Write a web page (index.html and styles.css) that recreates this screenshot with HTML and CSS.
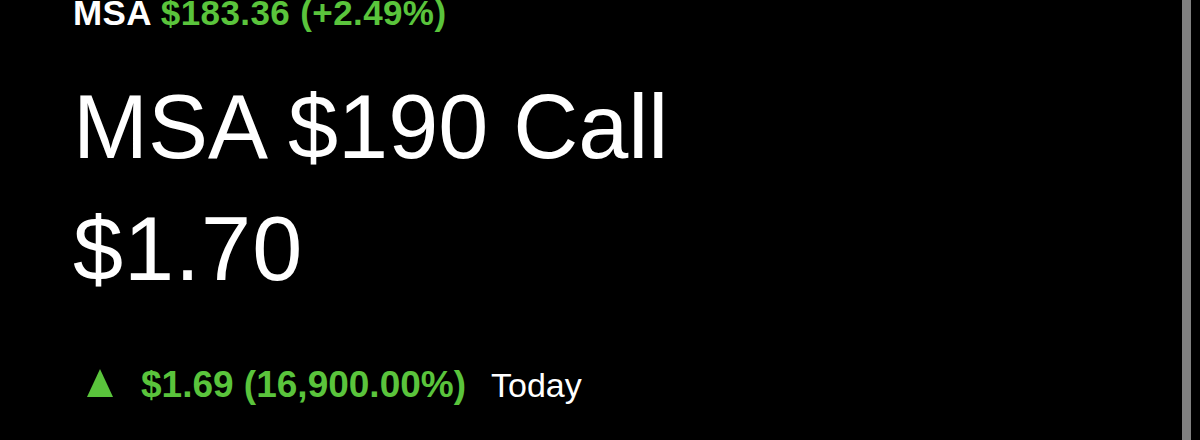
FILE: index.html
```html
<!DOCTYPE html>
<html>
<head>
    <title>MSA $190 Call</title>
    <link rel="stylesheet" href="styles.css">
</head>
<body>
    <div class="screen">
        <main class="quote">
            <!-- Underlying -->
            <div class="ticker">
                <span class="symbol">MSA</span>
                <span class="up">$183.36 (+2.49%)</span>
            </div>

            <h1 class="title">MSA $190 Call</h1>
            <div class="price">$1.70</div>

            <!-- Day change -->
            <div class="change">
                <svg class="arrow" width="26" height="28" viewBox="0 0 26 28">
                    <path d="M13,0 L26,28 L0,28 Z" fill="#5ac43c"/>
                </svg>
                <span class="up amount">$1.69 (16,900.00%)</span>
                <span class="period">Today</span>
            </div>
        </main>
        <div class="scrollbar"></div>
    </div>
</body>
</html>
```

FILE: styles.css
```css
html, body {
    margin: 0;
    height: 100%;
    background: #000;
    overflow: hidden;
}
body {
    font-family: "Liberation Sans", Arial, sans-serif;
    color: #fff;
}
.screen {
    display: flex;
    height: 440px;
}
.quote {
    flex: 0 0 1109px;
    padding-left: 73px;
}
.scrollbar {
    flex: 0 0 9px;
    background: #808080;
}
.up {
    color: #5ac43c;
}
.ticker {
    margin-top: -7px;
    font-size: 35px;
    font-weight: bold;
    line-height: 40px;
    letter-spacing: 0.4px;
}
.title {
    margin: 44px 0 0;
    font-size: 90px;
    font-weight: normal;
    line-height: 100px;
}
.price {
    margin-top: 22px;
    font-size: 90px;
    line-height: 100px;
    letter-spacing: 1px;
}
.change {
    display: flex;
    align-items: baseline;
    margin-top: 64px;
    line-height: 44px;
}
.arrow {
    margin: 0 28px -2px 14px;
}
.amount {
    font-size: 37px;
    font-weight: bold;
}
.period {
    margin-left: 25px;
    font-size: 34px;
}
```
